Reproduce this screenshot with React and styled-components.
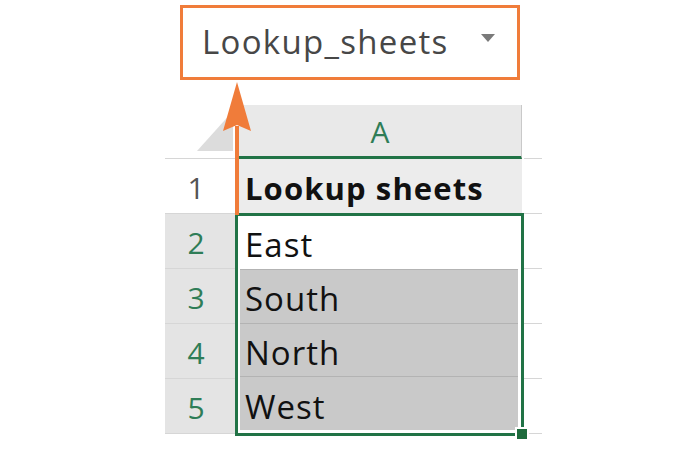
import React from "react";
import styled, { createGlobalStyle } from "styled-components";

const GlobalStyle = createGlobalStyle`
  html, body {
    margin: 0;
    padding: 0;
    background: #ffffff;
  }
  body {
    font-family: "Open Sans", "Noto Sans", sans-serif;
  }
`;

const GREEN = "#217346";
const ORANGE = "#f07c3a";
const LINE = "#d6d6d6";

const rows = [
  { num: 2, text: "East", active: true },
  { num: 3, text: "South" },
  { num: 4, text: "North" },
  { num: 5, text: "West" },
];

export default function App() {
  return (
    <>
      <GlobalStyle />
      <Page>
        <NameBox>
          <NameText>Lookup_sheets</NameText>
          <Caret />
        </NameBox>
        <Sheet>
          <RowHeaders>
            <Corner>
              <svg width="70" height="53" viewBox="0 0 70 53">
                <polygon points="32,46 68,46 68,6" fill="#dcdcdc" />
              </svg>
            </Corner>
            <RowNum>1</RowNum>
            {rows.map((r) => (
              <RowNum key={r.num} selected>
                {r.num}
              </RowNum>
            ))}
          </RowHeaders>
          <ColumnA>
            <ColHeader>A</ColHeader>
            <HeaderCell>Lookup sheets</HeaderCell>
            <Selection>
              {rows.map((r, i) => (
                <Cell key={r.num} $active={r.active} $first={i === 0}>
                  {r.text}
                </Cell>
              ))}
              <FillHandle />
            </Selection>
          </ColumnA>
          <Spare>
            <SpareHead />
            {[1, 2, 3, 4, 5].map((n) => (
              <SpareCell key={n} />
            ))}
          </Spare>
        </Sheet>
        <Arrow width="32" height="135" viewBox="0 0 32 135">
          <line x1="15" y1="44" x2="15" y2="133" stroke={ORANGE} strokeWidth="4" />
          <polygon points="15,0 1,49 15,43 29,49" fill={ORANGE} />
        </Arrow>
      </Page>
    </>
  );
}

const Page = styled.div`
  position: relative;
  width: 700px;
  height: 450px;
  padding-top: 5px;
  box-sizing: border-box;
  display: flex;
  flex-direction: column;
`;

const NameBox = styled.div`
  margin-left: 180px;
  width: 340px;
  height: 75px;
  box-sizing: border-box;
  border: 3px solid ${ORANGE};
  display: flex;
  align-items: center;
  justify-content: space-between;
  padding: 0 22px 2px 19px;
`;

const NameText = styled.span`
  font-size: 33px;
  color: #474747;
  letter-spacing: 1.3px;
`;

const Caret = styled.span`
  width: 0;
  height: 0;
  border-left: 7px solid transparent;
  border-right: 7px solid transparent;
  border-top: 8px solid #7a7a7a;
  margin-bottom: 8px;
`;

const Sheet = styled.div`
  margin-top: 25px;
  margin-left: 165px;
  display: flex;
`;

const RowHeaders = styled.div`
  width: 70px;
  display: flex;
  flex-direction: column;
`;

const Corner = styled.div`
  height: 53px;
  border-bottom: 1px solid ${LINE};
  display: flex;
`;

const RowNum = styled.div`
  height: 55px;
  box-sizing: border-box;
  border-bottom: 1px solid ${LINE};
  background: ${(p) => (p.selected ? "#e4e4e4" : "#ffffff")};
  color: ${(p) => (p.selected ? "#2f7d57" : "#555555")};
  font-size: 30px;
  display: flex;
  align-items: center;
  justify-content: center;
  padding: 3px 8px 0 0;
`;

const ColumnA = styled.div`
  width: 289px;
  display: flex;
  flex-direction: column;
`;

const ColHeader = styled.div`
  height: 54px;
  box-sizing: border-box;
  margin-left: 4px;
  margin-right: 2px;
  background: #e9e9e9;
  border-right: 1px solid #c9c9c9;
  border-bottom: 3px solid ${GREEN};
  color: #2f7d57;
  font-size: 30px;
  display: flex;
  align-items: center;
  justify-content: center;
  padding-top: 2px;
`;

const HeaderCell = styled.div`
  height: 54px;
  box-sizing: border-box;
  margin-left: 4px;
  margin-right: 2px;
  background: #ececec;
  color: #111111;
  font-size: 31px;
  font-weight: 700;
  display: flex;
  align-items: center;
  padding: 4px 0 0 6px;
  letter-spacing: 1.1px;
`;

const Selection = styled.div`
  position: relative;
  height: 223px;
  box-sizing: border-box;
  border: 3px solid ${GREEN};
  padding: 0 3px 3px 2px;
  background: #ffffff;
  display: flex;
  flex-direction: column;
`;

const Cell = styled.div`
  flex: 1;
  background: ${(p) => (p.$active ? "#ffffff" : "#c9c9c9")};
  border-top: ${(p) => (p.$first ? "none" : p.$active ? "none" : "1px solid #b3b3b3")};
  color: #111111;
  font-size: 33px;
  letter-spacing: 1px;
  display: flex;
  align-items: center;
  padding: 5px 0 0 5px;
`;

const FillHandle = styled.div`
  position: absolute;
  right: -8px;
  bottom: -8px;
  width: 10px;
  height: 10px;
  background: #1e6b3c;
  border: 2px solid #ffffff;
`;

const Spare = styled.div`
  width: 18px;
  display: flex;
  flex-direction: column;
`;

const SpareHead = styled.div`
  height: 53px;
  border-bottom: 1px solid ${LINE};
`;

const SpareCell = styled.div`
  height: 55px;
  box-sizing: border-box;
  border-bottom: 1px solid ${LINE};
`;

const Arrow = styled.svg`
  position: absolute;
  left: 222px;
  top: 82px;
`;
